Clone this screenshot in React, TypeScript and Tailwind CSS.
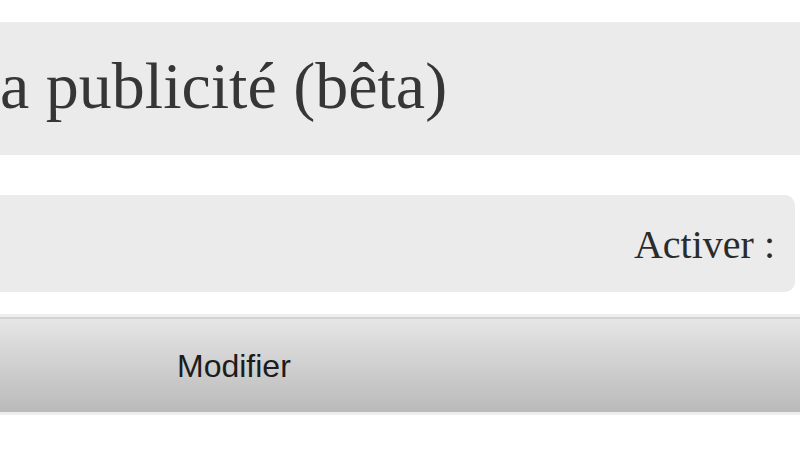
export default function App() {
  return (
    <div className="w-[800px] h-[450px] overflow-hidden bg-white">
      <div className="pt-[22px]">
        {/* Title panel */}
        <div className="h-[133px] bg-[#ebebeb] pt-[31px]">
          <h1 className="text-[66px] leading-[66px] text-[#363636] whitespace-nowrap font-['Liberation_Serif',serif]">
            a publicité (bêta)
          </h1>
        </div>

        {/* Settings panel */}
        <div className="mt-[40px] w-[795px] h-[97px] bg-[#ebebeb] rounded-r-[10px] flex justify-end pr-[20px] pt-[30px]">
          <span className="text-[40px] leading-[40px] text-[#2b2b2b] font-['Liberation_Serif',serif]">
            Activer :
          </span>
        </div>

        {/* Toolbar */}
        <div className="mt-[22px] bg-[#eeeeee] py-[3px]">
          <div className="h-[95px] border-t-2 border-[#d2d2d2] bg-gradient-to-b from-[#e6e6e6] to-[#bababa] pl-[177px] pt-[31px]">
            <span className="text-[32px] leading-[32px] text-[#1c1c1c] font-['Liberation_Sans',Arial,sans-serif]">
              Modifier
            </span>
          </div>
        </div>
      </div>
    </div>
  )
}
